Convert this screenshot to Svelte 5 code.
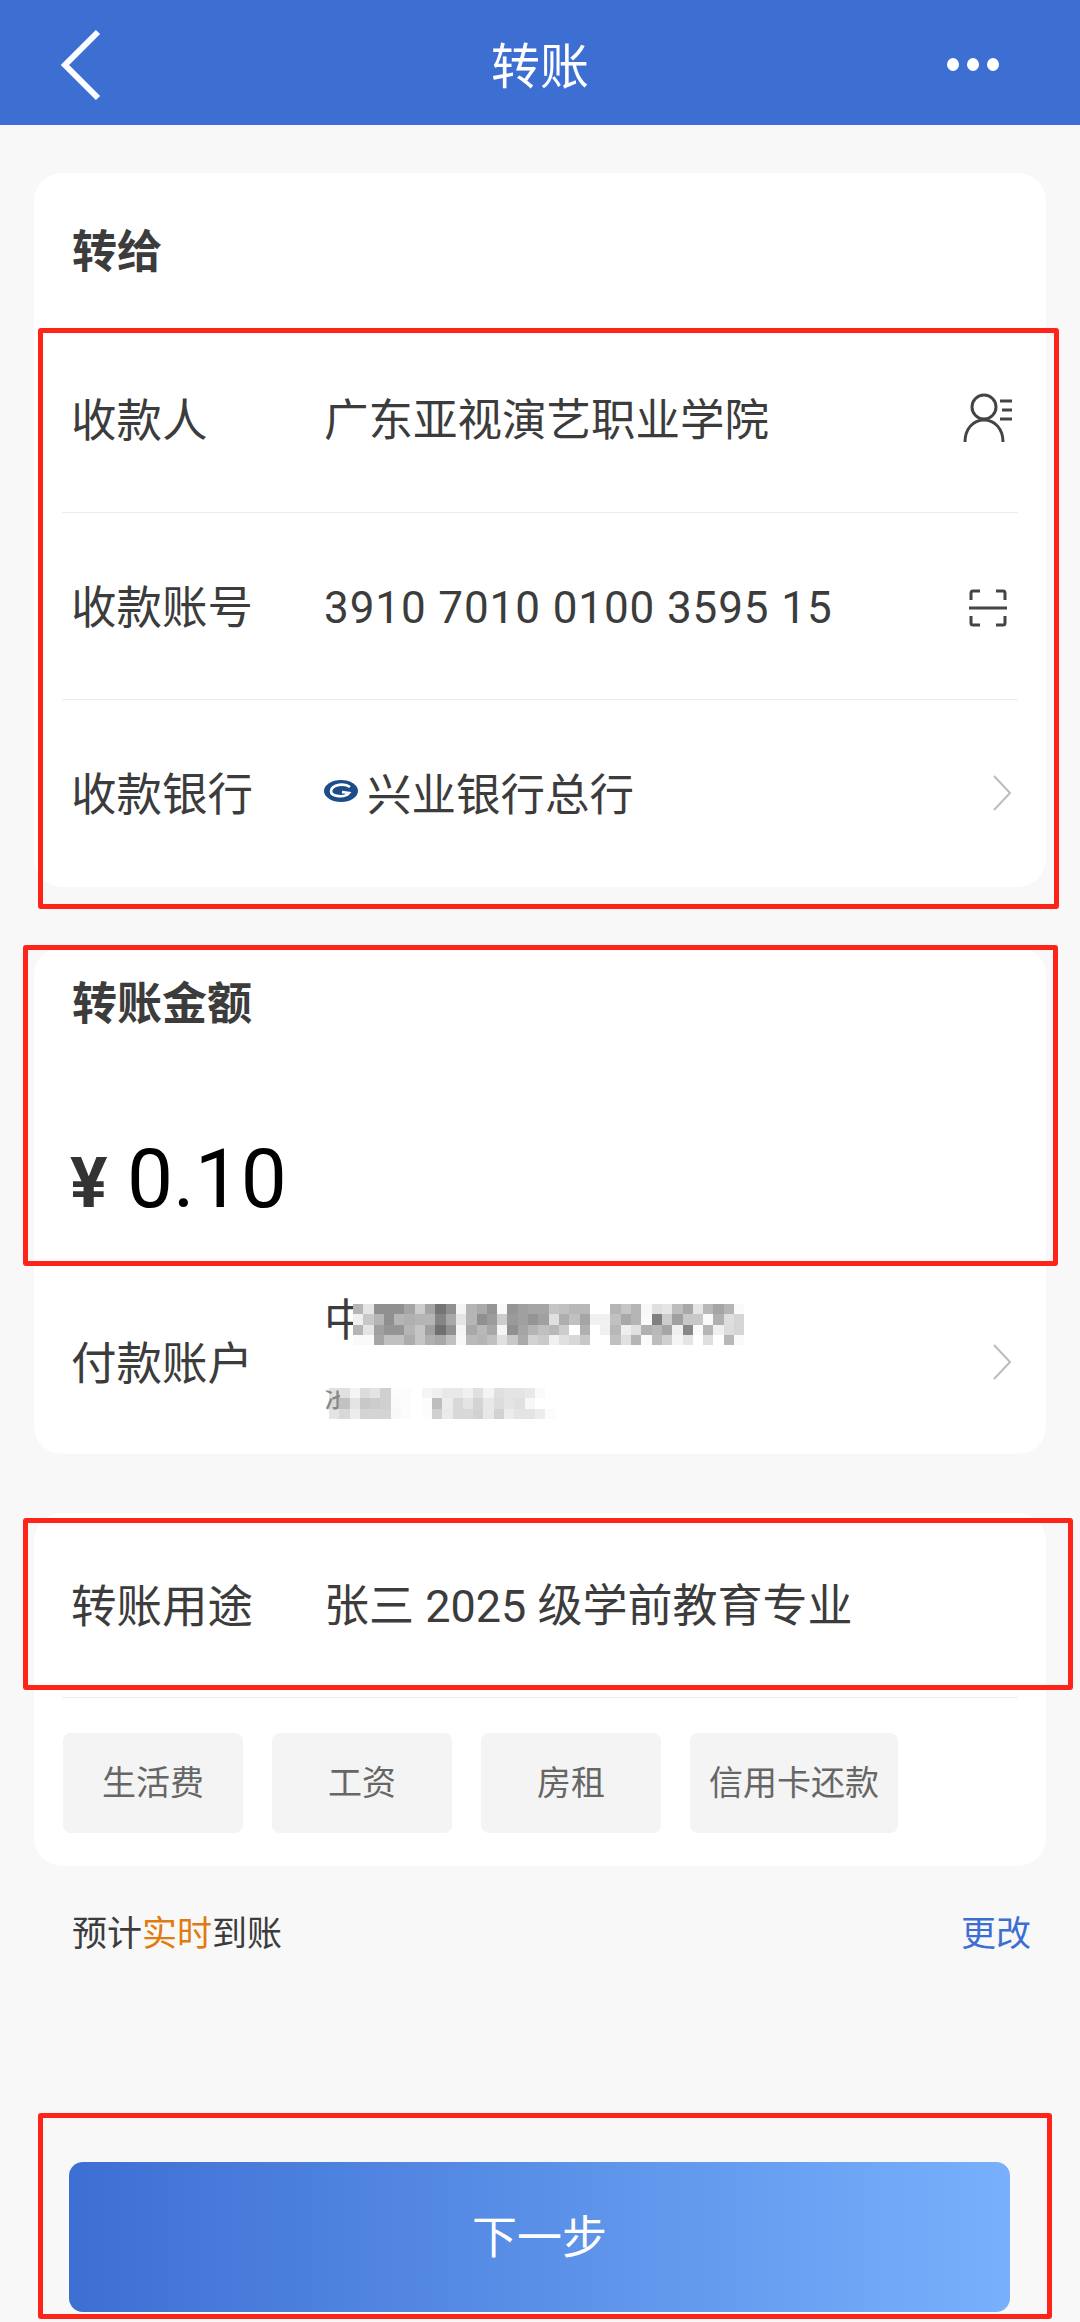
<script>
  // blurred account details, one string of grey levels per row
  const nameMosaic = [
    "b5 e5 90 90 90 a5 cc a5 75 90 f5 b5 aa 95 fa 95 a0 a5 a5 c5 c0 b8 b8 ff ff b5 c5 b5 f8 e0 e5 bd a8 e5 b8 a5 b5 fa",
    "f0 c8 b5 8f b5 b0 b5 b5 85 a8 e5 b5 90 9c cc 9a a0 95 a0 e0 ae c0 a5 f0 f0 c0 a8 b5 fa 80 cc a0 c8 c8 fa b0 de d5",
    "b5 e5 a0 95 95 b5 c5 a0 70 90 f5 a8 b8 a8 f5 90 a5 b5 c0 b8 cc ff b0 ff f0 b8 ee e0 b0 b8 a5 f0 88 fa b5 f0 dc d5",
    "fa fa a5 c0 c0 ac c5 b0 a8 c0 f8 ba b5 c0 e0 c8 aa d2 ca f0 e0 d8 c8 ff ff c0 e0 b5 fa bc d0 f5 e5 ff de ff b8 fa"
  ];
  const subMosaic = [
    "e0 e0 f4 dc e4 d0 fc fc ff f5 f0 e8 e8 f0 e0 f4 e0 e4 e4 e8 fa ff",
    "d8 c2 e4 c8 cc d0 fa fc ff fc be ec d8 e4 d4 e8 dc e4 e0 f8 ff ff",
    "e4 d8 ec d4 d4 d4 f8 fc ff fc d0 ea d8 d8 d2 e8 d2 ec e4 e4 ec fc"
  ];
  const chips = ["生活费", "工资", "房租", "信用卡还款"];
  const parse = (rows) => rows.flatMap((r) => r.split(" "));
</script>

<div class="page">
  <header class="topbar">
    <svg class="back" viewBox="0 0 44 72" width="44" height="72">
      <path d="M38 3 L5 36 L38 69" />
    </svg>
    <h1>转账</h1>
    <div class="dots"><span></span><span></span><span></span></div>
  </header>

  <section class="card first">
    <h2 class="head">转给</h2>
    <div class="row line">
      <span class="label">收款人</span>
      <span class="value">广东亚视演艺职业学院</span>
      <svg class="icon person" viewBox="0 0 50 50" width="50" height="50">
        <circle cx="21" cy="14" r="12" />
        <path d="M2 49 C2 36 10 27 21 27 C32 27 40 36 40 49" />
        <path d="M37 8 H49 M39 17 H49 M37 26 H49" />
      </svg>
    </div>
    <div class="row line">
      <span class="label">收款账号</span>
      <span class="value digits">3910 7010 0100 3595 15</span>
      <svg class="icon scan" viewBox="0 0 38 38" width="38" height="38">
        <path d="M2 11 V4 Q2 2 4 2 H11 M27 2 H34 Q36 2 36 4 V11 M2 27 V34 Q2 36 4 36 H11 M27 36 H34 Q36 36 36 34 V27" />
        <path d="M0 19 H38" />
      </svg>
    </div>
    <div class="row">
      <span class="label">收款银行</span>
      <span class="value bank">
        <svg class="logo" viewBox="0 0 34 22" width="34" height="22">
          <ellipse cx="17" cy="11" rx="17" ry="11" />
          <path class="swirl" d="M26 7 C21 3 8 4 7 11 C7 17 21 18 25 13 L18 12" />
        </svg>
        兴业银行总行
      </span>
      <svg class="chevron" viewBox="0 0 18 36" width="18" height="36">
        <path d="M1 1 L17 18 L1 35" />
      </svg>
    </div>
  </section>

  <section class="card second">
    <h2 class="head small">转账金额</h2>
    <div class="amount"><span class="yen">¥</span><span class="sum">0.10</span></div>
    <div class="row payer">
      <span class="label">付款账户</span>
      <div class="account">
        <span class="acc-name">中</span>
        <div class="mosaic name">
          {#each parse(nameMosaic) as grey}
            <i style="background:#{grey}{grey}{grey}"></i>
          {/each}
        </div>
        <div class="mosaic sub">
          {#each parse(subMosaic) as grey}
            <i style="background:#{grey}{grey}{grey}"></i>
          {/each}
        </div>
        <span class="acc-sub">浙</span>
      </div>
      <svg class="chevron" viewBox="0 0 18 36" width="18" height="36">
        <path d="M1 1 L17 18 L1 35" />
      </svg>
    </div>
  </section>

  <section class="card third">
    <div class="row purpose">
      <span class="label">转账用途</span>
      <span class="value wide">张三 2025 级学前教育专业</span>
    </div>
    <div class="chips">
      {#each chips as chip}
        <span class="chip">{chip}</span>
      {/each}
    </div>
  </section>

  <div class="eta">
    <span>预计<em>实时</em>到账</span>
    <a href="#change">更改</a>
  </div>

  <button class="next">下一步</button>

  <!-- red annotation frames drawn over the screenshot -->
  <div class="mark m1"></div>
  <div class="mark m2"></div>
  <div class="mark m3"></div>
  <div class="mark m4"></div>
</div>

<style>
  :global(body) {
    margin: 0;
    background: #f8f8f8;
  }

  .page {
    position: relative;
    width: 1080px;
    height: 2322px;
    overflow: hidden;
    background: #f8f8f8;
    color: #3c3c3c;
    font-family: "Roboto", "Noto Sans CJK SC", sans-serif;
    font-size: 44px;
  }

  .topbar {
    position: relative;
    display: flex;
    align-items: center;
    justify-content: center;
    height: 125px;
    background: #3d6fd3;
    color: #fff;
  }

  .topbar h1 {
    margin: 0;
    font-size: 49px;
    font-weight: 400;
  }

  .back {
    position: absolute;
    left: 60px;
    top: 29px;
  }

  .back path {
    fill: none;
    stroke: #fff;
    stroke-width: 6;
  }

  .dots {
    position: absolute;
    left: 947px;
    top: 58px;
    display: flex;
    gap: 8px;
  }

  .dots span {
    width: 12px;
    height: 13px;
    border-radius: 50%;
    background: #fff;
  }

  .card {
    margin: 0 34px;
    background: #fff;
    border-radius: 28px;
    overflow: hidden;
  }

  .first {
    margin-top: 48px;
  }

  .second {
    margin-top: 60px;
  }

  .third {
    margin-top: 59px;
    padding-bottom: 33px;
  }

  .head {
    margin: 0;
    height: 153px;
    padding: 58px 0 0 38px;
    box-sizing: border-box;
    font-size: 45px;
    font-weight: 700;
    line-height: 44px;
  }

  .head.small {
    height: 107px;
    padding-top: 36px;
  }

  .row {
    position: relative;
    display: flex;
    align-items: center;
    height: 187px;
    margin: 0 28px;
    padding-left: 10px;
    box-sizing: border-box;
  }

  .row.line,
  .row.purpose {
    border-bottom: 1px solid #ececec;
  }

  .label {
    flex: 0 0 252px;
    margin-left: -1px;
    padding-bottom: 5px;
    font-size: 45.5px;
  }

  .value {
    margin-left: 1px;
    padding-bottom: 5px;
    font-size: 44.5px;
  }

  .value.digits {
    padding: 3px 0 0;
    font-size: 44px;
    letter-spacing: 0.9px;
  }

  .value.wide {
    font-size: 45px;
  }

  .bank {
    display: flex;
    align-items: center;
    gap: 9px;
  }

  .logo {
    margin-top: -1px;
  }

  .logo ellipse {
    fill: #1c4c8a;
  }

  .logo .swirl {
    fill: none;
    stroke: #fff;
    stroke-width: 2.6;
  }

  .icon {
    position: absolute;
    fill: none;
    stroke: #444;
    stroke-width: 3;
  }

  .person {
    left: 901px;
    top: 67px;
  }

  .scan {
    left: 907px;
    top: 76px;
  }

  .chevron {
    position: absolute;
    left: 931px;
    top: 75px;
  }

  .payer .chevron {
    top: 74px;
  }

  .chevron path {
    fill: none;
    stroke: #bdbdbd;
    stroke-width: 2;
  }

  .amount {
    display: flex;
    align-items: baseline;
    height: 216px;
    padding: 75px 0 0 36px;
    box-sizing: border-box;
    color: #000;
    line-height: 100px;
  }

  .yen {
    width: 57px;
    color: #333;
    font-size: 70px;
    font-weight: 700;
  }

  .sum {
    font-size: 82px;
  }

  .row.payer {
    height: 184px;
  }

  .account {
    position: relative;
    width: 500px;
    height: 184px;
    margin-left: 1px;
  }

  .acc-name {
    position: absolute;
    left: 0;
    top: 26px;
    font-size: 44px;
    line-height: 50px;
  }

  .acc-sub {
    position: absolute;
    left: 0;
    top: 108px;
    color: #888;
    font-size: 32px;
    line-height: 36px;
    clip-path: inset(35% 50% 0 0);
  }

  .mosaic {
    position: absolute;
    display: grid;
    grid-auto-rows: 10.3px;
  }

  .mosaic i {
    display: block;
  }

  .mosaic.name {
    left: 29px;
    top: 34px;
    grid-template-columns: repeat(38, 10.3px);
  }

  .mosaic.sub {
    left: 5px;
    top: 118px;
    grid-template-columns: repeat(22, 10.3px);
  }

  .row.purpose {
    height: 185px;
  }

  .chips {
    display: flex;
    gap: 29px;
    margin: 35px 0 0 29px;
  }

  .chip {
    display: flex;
    align-items: center;
    justify-content: center;
    min-width: 180px;
    height: 100px;
    padding: 0 18px 6px;
    box-sizing: border-box;
    border-radius: 8px;
    background: #f4f4f4;
    color: #666;
    font-size: 34px;
  }

  .chip:last-child {
    min-width: 208px;
    padding: 0 0 6px;
  }

  .eta {
    display: flex;
    justify-content: space-between;
    align-items: center;
    height: 48px;
    margin: 40px 49px 0 72px;
    font-size: 35px;
  }

  .eta em {
    color: #e07b10;
    font-style: normal;
  }

  .eta a {
    color: #3d6fd3;
    text-decoration: none;
  }

  .next {
    display: block;
    width: 941px;
    height: 150px;
    margin: 208px 0 0 69px;
    padding: 0 0 6px;
    border: 0;
    border-radius: 14px;
    background: linear-gradient(90deg, #3d6fd3, #78b0fc);
    color: #fff;
    font: inherit;
    font-size: 45px;
  }

  .mark {
    position: absolute;
    box-sizing: border-box;
    border: 5px solid #ff2419;
    border-radius: 3px;
  }

  .m1 {
    left: 38px;
    top: 328px;
    width: 1021px;
    height: 581px;
  }

  .m2 {
    left: 23px;
    top: 945px;
    width: 1035px;
    height: 321px;
  }

  .m3 {
    left: 23px;
    top: 1518px;
    width: 1050px;
    height: 172px;
  }

  .m4 {
    left: 38px;
    top: 2113px;
    width: 1014px;
    height: 206px;
  }
</style>
